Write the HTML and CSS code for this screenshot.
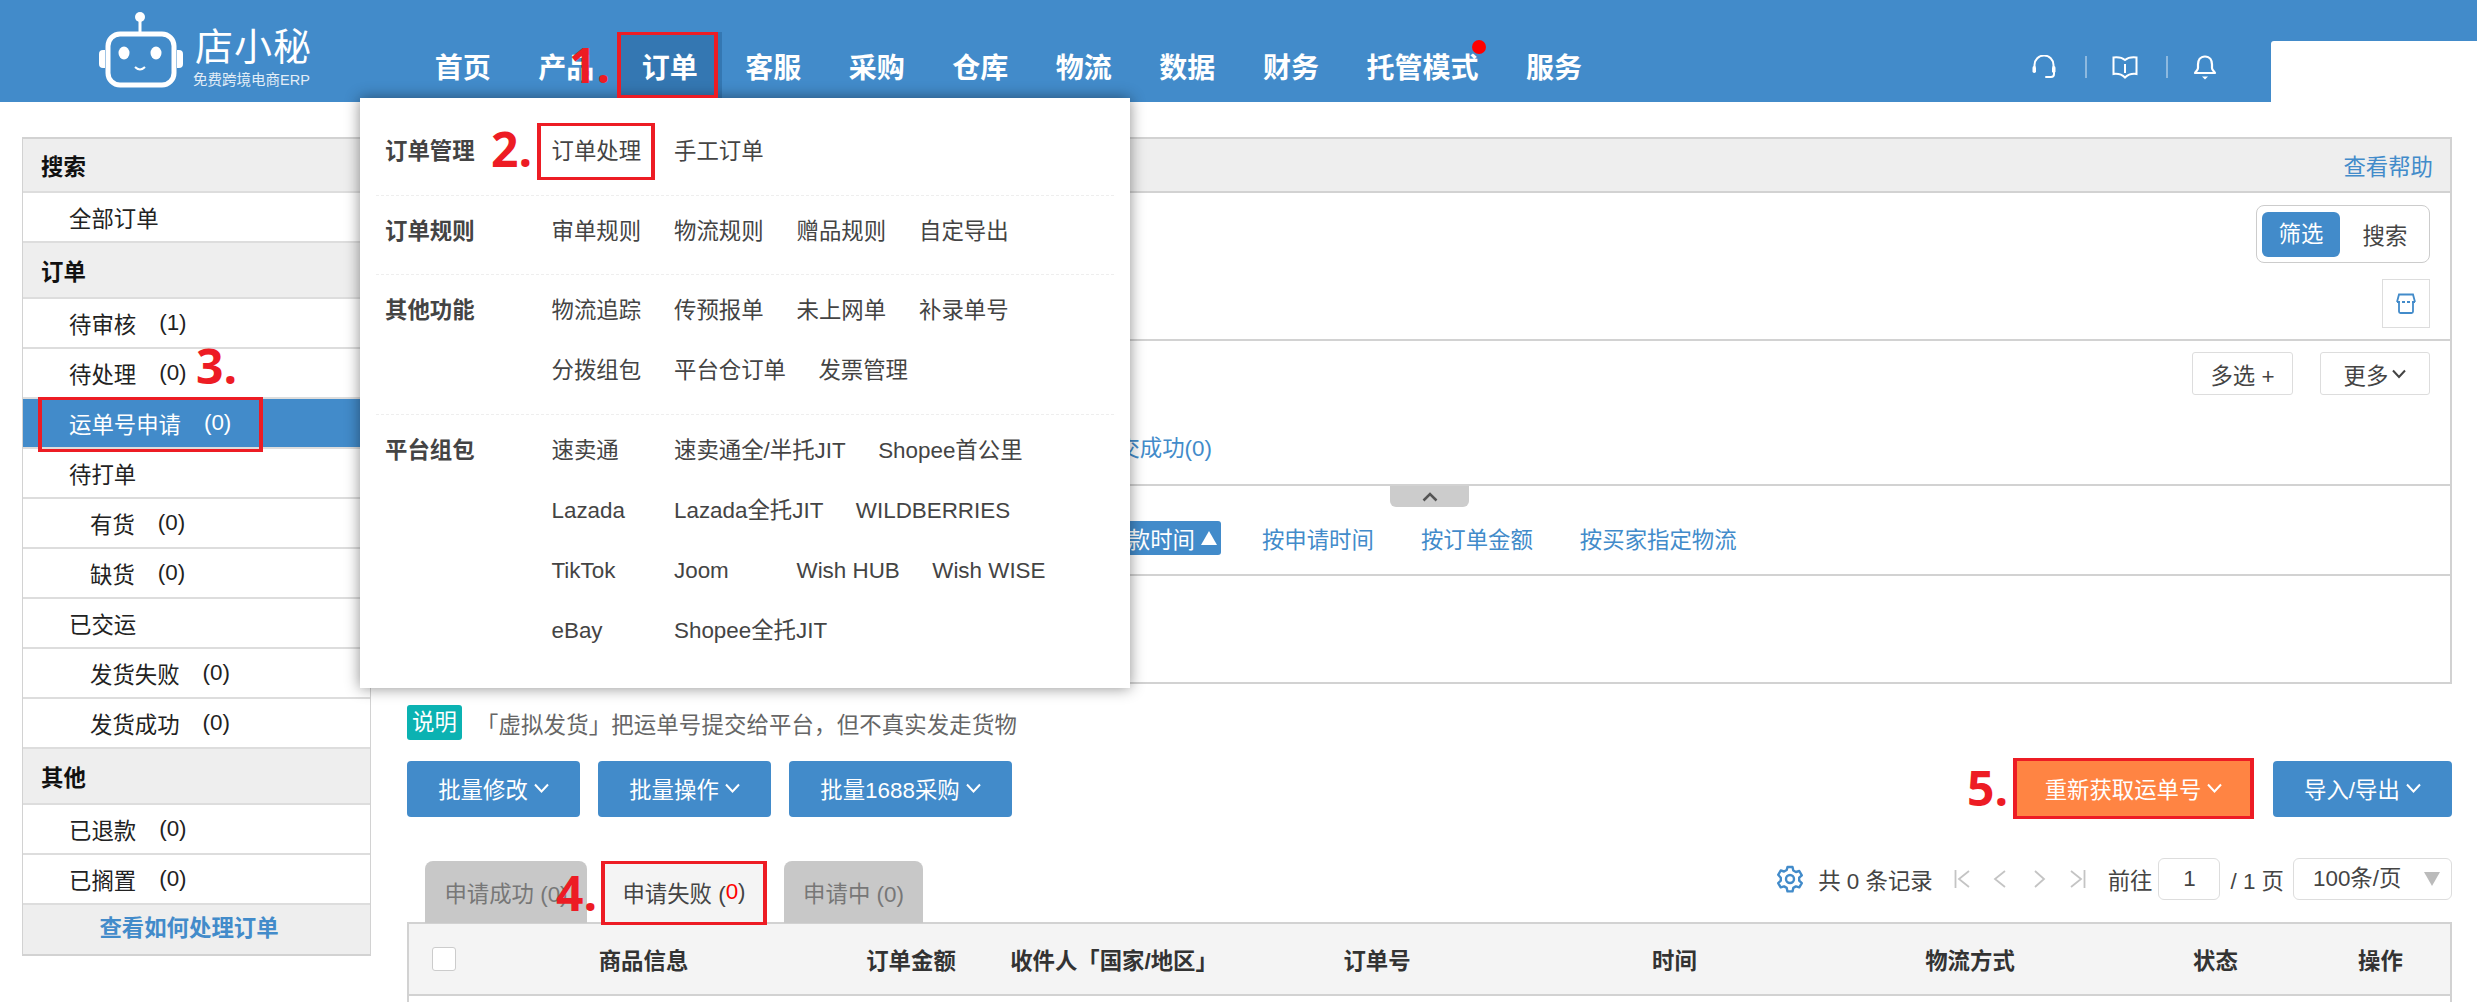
FILE: index.html
```html
<!DOCTYPE html>
<html lang="zh-CN">
<head>
    <meta charset="UTF-8">
    <title>店小秘 - 订单</title>
    <link rel="stylesheet" href="styles.css">
</head>
<body>
    <div class="header">
        <div class="logo">
            <svg class="logo-bot" width="84" height="76" viewBox="0 0 84 76">
                <circle cx="41" cy="5" r="5" fill="#fff"/>
                <path d="M41 8v12" stroke="#fff" stroke-width="3"/>
                <rect x="9" y="22" width="66" height="51" rx="12" fill="none" stroke="#fff" stroke-width="5"/>
                <path d="M6 38h-2a4 4 0 0 0-4 4v10a4 4 0 0 0 4 4h2zM78 38h2a4 4 0 0 1 4 4v10a4 4 0 0 1-4 4h-2z" fill="#fff"/>
                <ellipse cx="25" cy="41" rx="5.5" ry="6.5" fill="#fff"/>
                <ellipse cx="57" cy="41" rx="5.5" ry="6.5" fill="#fff"/>
                <path d="M36 55q5 5 10 0" fill="none" stroke="#fff" stroke-width="2"/>
            </svg>
            <div class="logo-text">
                <div class="logo-name">店小秘</div>
                <div class="logo-sub">免费跨境电商ERP</div>
            </div>
        </div>
        <div class="nav">
            <div class="nav-item">首页</div>
            <div class="nav-item">产品</div>
            <div class="nav-item nav-active">订单</div>
            <div class="nav-item">客服</div>
            <div class="nav-item">采购</div>
            <div class="nav-item">仓库</div>
            <div class="nav-item">物流</div>
            <div class="nav-item">数据</div>
            <div class="nav-item">财务</div>
            <div class="nav-item">托管模式<span class="red-dot"></span></div>
            <div class="nav-item">服务</div>
        </div>
        <div class="tools">
            <svg width="26" height="24" viewBox="0 0 26 24" fill="none" stroke="#fff" stroke-width="2">
                <path d="M3.500 12V10a9.500 9.500 0 0 1 19 0v2"/>
                <rect x="1.500" y="11" width="3.500" height="7" rx="1.700" fill="#fff" stroke="none"/>
                <rect x="21" y="11" width="3.500" height="7" rx="1.700" fill="#fff" stroke="none"/>
                <path d="M23 17v2a3 3 0 0 1-3 3h-5" stroke-linecap="round"/>
            </svg>
            <span class="tool-sep"></span>
            <svg width="26" height="23" viewBox="0 0 26 23" fill="none" stroke="#fff" stroke-width="2">
                <path d="M13 4C10 1.500 6 1 1.500 1.500V18c4-.5 8 0 11.500 3.500C16.500 18 20.500 17.500 24.500 18V1.500C20 1 16 1.500 13 4z"/>
                <path d="M13 8v9"/>
            </svg>
            <span class="tool-sep"></span>
            <svg width="24" height="26" viewBox="0 0 24 26" fill="none" stroke="#fff" stroke-width="2.200">
                <path d="M12 2.500c-5 0-7 4-7 8v3.500c0 2-2 3-3 5h20c-1-2-3-3-3-5v-3.500c0-4-2-8-7-8z" stroke-linejoin="round"/>
                <path d="M9 22.500h6l-3 3z" fill="#fff" stroke="none"/>
            </svg>
        </div>
        <div class="notch"></div>
    </div>

    <div class="page">
        <div class="sidebar">
            <div class="side-title side-first">搜索</div>
            <div class="side-row">全部订单</div>
            <div class="side-title">订单</div>
            <div class="side-row">待审核<span class="num">(1)</span></div>
            <div class="side-row">待处理<span class="num">(0)</span></div>
            <div class="side-row side-active">运单号申请<span class="num">(0)</span></div>
            <div class="side-row">待打单</div>
            <div class="side-row side-sub">有货<span class="num">(0)</span></div>
            <div class="side-row side-sub">缺货<span class="num">(0)</span></div>
            <div class="side-row">已交运</div>
            <div class="side-row side-sub">发货失败<span class="num">(0)</span></div>
            <div class="side-row side-sub">发货成功<span class="num">(0)</span></div>
            <div class="side-title">其他</div>
            <div class="side-row">已退款<span class="num">(0)</span></div>
            <div class="side-row">已搁置<span class="num">(0)</span></div>
            <div class="side-foot">查看如何处理订单</div>
        </div>

        <div class="main">
            <div class="panel">
                <div class="panel-head"><span class="link">查看帮助</span></div>
                <div class="panel-filter">
                    <div class="switch">
                        <span class="switch-on">筛选</span>
                        <span class="switch-off">搜索</span>
                    </div>
                    <div class="icon-btn">
                        <svg width="20" height="21" viewBox="0 0 20 21" fill="none" stroke="#428bca" stroke-width="1.800">
                            <path d="M1 9L3 1.500h14L19 9"/>
                            <path d="M1 9h18" stroke-dasharray="3 2"/>
                            <path d="M3 9.500v9a1.500 1.500 0 0 0 1.500 1.500h11a1.500 1.500 0 0 0 1.500-1.500v-9"/>
                        </svg>
                    </div>
                </div>
                <div class="panel-status">
                    <div class="status-btns">
                        <span class="small-btn small-multi">多选 +</span>
                        <span class="small-btn small-more">更多
                            <svg width="14" height="10" viewBox="0 0 14 10" fill="none" stroke="#444" stroke-width="2"><path d="M1 1.500l6 6.500 6-6.500"/></svg>
                        </span>
                    </div>
                    <div class="status-link link">提交成功(0)</div>
                </div>
                <div class="panel-sort">
                    <div class="collapse">
                        <svg width="16" height="10" viewBox="0 0 16 10" fill="none" stroke="#555" stroke-width="2.500"><path d="M1.500 8.500L8 2l6.500 6.500"/></svg>
                    </div>
                    <span class="sort-on">按付款时间<i class="sort-arrow"></i></span>
                    <span class="link sort-link">按申请时间</span>
                    <span class="link sort-link">按订单金额</span>
                    <span class="link sort-link">按买家指定物流</span>
                </div>
                <div class="panel-blank"></div>
            </div>

            <div class="note">
                <span class="note-tag">说明</span>
                <span class="note-text">「虚拟发货」把运单号提交给平台，但不真实发走货物</span>
            </div>

            <div class="actions">
                <div class="action-group">
                    <span class="btn btn-batch1">批量修改<svg class="chev" width="15" height="10" viewBox="0 0 15 10"><path d="M1 1.500l6.500 7 6.500-7"/></svg></span>
                    <span class="btn btn-batch2">批量操作<svg class="chev" width="15" height="10" viewBox="0 0 15 10"><path d="M1 1.500l6.500 7 6.500-7"/></svg></span>
                    <span class="btn btn-batch3">批量1688采购<svg class="chev" width="15" height="10" viewBox="0 0 15 10"><path d="M1 1.500l6.500 7 6.500-7"/></svg></span>
                </div>
                <div class="action-group action-right">
                    <span class="btn btn-orange">重新获取运单号<svg class="chev" width="15" height="10" viewBox="0 0 15 10"><path d="M1 1.500l6.500 7 6.500-7"/></svg></span>
                    <span class="btn btn-import">导入/导出<svg class="chev" width="15" height="10" viewBox="0 0 15 10"><path d="M1 1.500l6.500 7 6.500-7"/></svg></span>
                </div>
            </div>

            <div class="tabbar">
                <div class="tabs">
                    <span class="tab tab-ok">申请成功 (0)</span>
                    <span class="tab tab-on">申请失败 (<b>0</b>)</span>
                    <span class="tab tab-ing">申请中 (0)</span>
                </div>
                <div class="pager">
                    <svg class="gear" width="28" height="28" viewBox="0 0 28 28" fill="none" stroke="#428bca" stroke-width="2.400" stroke-linejoin="round">
                        <path d="M11.500 2h5l.8 3.500 2.600 1.500 3.400-1 2.500 4.300-2.600 2.400v3l2.600 2.400-2.500 4.300-3.400-1-2.600 1.500-.8 3.500h-5l-.8-3.500-2.600-1.500-3.400 1-2.500-4.300 2.600-2.400v-3L2.200 9.800l2.500-4.300 3.400 1 2.600-1.500z"/>
                        <circle cx="14" cy="14" r="4"/>
                    </svg>
                    <span class="total">共 0 条记录</span>
                    <span class="page-arrows">
                        <svg width="16" height="18" viewBox="0 0 16 18" fill="none" stroke="#c4c4c4" stroke-width="1.800"><path d="M1.500 0v18M15 1L5 9l10 8"/></svg>
                        <svg width="16" height="18" viewBox="0 0 16 18" fill="none" stroke="#c4c4c4" stroke-width="1.800"><path d="M13 1L3 9l10 8"/></svg>
                        <svg width="16" height="18" viewBox="0 0 16 18" fill="none" stroke="#c4c4c4" stroke-width="1.800"><path d="M5 1l9 8-9 8"/></svg>
                        <svg width="18" height="18" viewBox="0 0 18 18" fill="none" stroke="#c4c4c4" stroke-width="1.800"><path d="M3 1l10 8-10 8M16.500 0v18"/></svg>
                    </span>
                    <span class="goto">前往</span>
                    <span class="page-input">1</span>
                    <span class="page-of">/ 1 页</span>
                    <span class="page-size">100条/页<i class="tri"></i></span>
                </div>
            </div>

            <div class="thead">
                <div class="th"><span class="check"></span></div>
                <div class="th">商品信息</div>
                <div class="th">订单金额</div>
                <div class="th">收件人「国家/地区」</div>
                <div class="th">订单号</div>
                <div class="th">时间</div>
                <div class="th">物流方式</div>
                <div class="th">状态</div>
                <div class="th">操作</div>
            </div>
            <div class="tbody"></div>
        </div>
    </div>

    <!-- 下拉菜单 -->
    <div class="menu">
        <div class="menu-group">
            <div class="menu-label">订单管理</div>
            <div class="menu-items">
                <span>订单处理</span><span>手工订单</span>
            </div>
        </div>
        <div class="menu-group">
            <div class="menu-label">订单规则</div>
            <div class="menu-items">
                <span>审单规则</span><span>物流规则</span><span>赠品规则</span><span>自定导出</span>
            </div>
        </div>
        <div class="menu-group">
            <div class="menu-label">其他功能</div>
            <div class="menu-items">
                <span>物流追踪</span><span>传预报单</span><span>未上网单</span><span>补录单号</span>
                <span>分拨组包</span><span>平台仓订单</span><span>发票管理</span>
            </div>
        </div>
        <div class="menu-group">
            <div class="menu-label">平台组包</div>
            <div class="menu-items">
                <span>速卖通</span><span>速卖通全/半托JIT</span><span>Shopee首公里</span>
                <span class="br">Lazada</span><span>Lazada全托JIT</span><span>WILDBERRIES</span>
                <span class="br">TikTok</span><span>Joom</span><span>Wish HUB</span><span>Wish WISE</span>
                <span class="br">eBay</span><span>Shopee全托JIT</span>
            </div>
        </div>
    </div>

    <!-- 教程标注 -->
    <div class="mark mark-1">1.</div>
    <div class="mark mark-2">2.</div>
    <div class="mark mark-3">3.</div>
    <div class="mark mark-4">4.</div>
    <div class="mark mark-5">5.</div>
    <div class="red-box box-nav"></div>
    <div class="red-box box-menu"></div>
    <div class="red-box box-side"></div>
    <div class="red-box box-tab"></div>
</body>
</html>
```

FILE: styles.css
```css
* {
    box-sizing: border-box;
}
html, body {
    margin: 0;
    padding: 0;
    height: 1002px;
    overflow: hidden;
}
body {
    font-family: "Liberation Sans", "Noto Sans CJK SC", sans-serif;
    font-size: 22.4px;
    color: #444;
    background-color: #fff;
}
.link {
    color: #428bca;
}

/* 顶部导航 */
.header {
    display: flex;
    align-items: flex-end;
    height: 102px;
    background-color: #428bca;
}
.logo {
    display: flex;
    align-self: flex-start;
    width: 411px;
    padding: 12px 0 0 99px;
    color: #fff;
}
.logo-text {
    margin: 13px 0 0 10px;
}
.logo-name {
    font-size: 38px;
    line-height: 44px;
    padding-left: 2px;
    letter-spacing: 1px;
}
.logo-sub {
    font-size: 14.500px;
    line-height: 18px;
    margin-top: 2px;
    opacity: .85;
}
.nav {
    display: flex;
    margin-bottom: 4px;
}
.nav-item {
    position: relative;
    display: flex;
    align-items: center;
    height: 66px;
    padding: 2px 23.750px 0;
    font-size: 28px;
    font-weight: bold;
    color: #fff;
}
.nav-active {
    background-color: #3477b2;
}
.red-dot {
    position: absolute;
    top: 8px;
    right: 16px;
    width: 14px;
    height: 14px;
    border-radius: 50%;
    background-color: #f00;
}
.tools {
    display: flex;
    align-items: center;
    margin: 0 54px 22px auto;
}
.tool-sep {
    width: 2px;
    height: 22px;
    margin: 0 25px 0 28px;
    background-color: #8db9df;
}
.tools svg {
    display: block;
}
.notch {
    width: 206px;
    height: 61px;
    background-color: #fff;
    border-top-left-radius: 3px;
}

/* 左侧菜单 */
.page {
    display: flex;
    align-items: flex-start;
    padding: 35px 25px 0 22px;
}
.sidebar {
    width: 349px;
    border: solid #d2d2d2;
    border-width: 2px 1px 2px 1px;
    color: #222;
}
.side-title {
    display: flex;
    align-items: center;
    height: 56px;
    padding-left: 18px;
    font-weight: bold;
    color: #111;
    background-color: #eee;
    border-bottom: 2px solid #ddd;
}
.side-first {
    height: 54px;
}
.side-row {
    display: flex;
    align-items: center;
    height: 50px;
    padding-left: 46px;
    border-bottom: 2px solid #ddd;
}
.side-sub {
    padding-left: 67px;
}
.side-active {
    color: #fff;
    background-color: #428bca;
}
.num {
    margin-left: 23px;
}
.side-foot {
    height: 49px;
    line-height: 48px;
    padding-right: 15px;
    text-align: center;
    font-weight: bold;
    color: #428bca;
    background-color: #eee;
}

/* 主区域 */
.main {
    width: 2045px;
    margin-left: 36px;
}
.panel {
    height: 547px;
    border: 2px solid #d2d2d2;
    display: flex;
    flex-direction: column;
}
.panel-head {
    display: flex;
    justify-content: flex-end;
    align-items: center;
    height: 54px;
    padding-right: 17px;
    background-color: #eee;
    border-bottom: 2px solid #d2d2d2;
}
.panel-filter {
    display: flex;
    flex-direction: column;
    align-items: flex-end;
    height: 148px;
    padding: 12px 20px 0 0;
    border-bottom: 2px solid #d2d2d2;
}
.switch {
    display: flex;
    align-items: center;
    width: 174px;
    height: 58px;
    padding: 0 5px;
    border: 1px solid #ccc;
    border-radius: 8px;
}
.switch-on {
    width: 78px;
    height: 45px;
    line-height: 45px;
    text-align: center;
    color: #fff;
    background-color: #428bca;
    border-radius: 6px;
}
.switch-off {
    flex: 1;
    padding-left: 6px;
    text-align: center;
}
.icon-btn {
    display: flex;
    justify-content: center;
    align-items: center;
    width: 48px;
    height: 49px;
    margin-top: 16px;
    border: 1px solid #ddd;
}
.panel-status {
    height: 145px;
    padding: 11px 20px 0 0;
    border-bottom: 2px solid #d2d2d2;
}
.status-btns {
    display: flex;
    justify-content: flex-end;
    gap: 27px;
}
.small-btn {
    display: flex;
    justify-content: center;
    align-items: center;
    gap: 4px;
    height: 43px;
    border: 1px solid #ddd;
    border-radius: 3px;
}
.small-multi {
    width: 101px;
}
.small-more {
    width: 110px;
}
.status-link {
    margin: 39px 0 0 686px;
    line-height: 30px;
}
.panel-sort {
    position: relative;
    display: flex;
    align-items: center;
    height: 90px;
    padding: 15px 0 0 661px;
    border-bottom: 2px solid #d2d2d2;
}
.collapse {
    position: absolute;
    top: 0;
    left: 981px;
    display: flex;
    justify-content: center;
    align-items: center;
    width: 79px;
    height: 21px;
    background-color: #ccc;
    border-radius: 0 0 6px 6px;
}
.sort-on {
    display: flex;
    align-items: center;
    gap: 6px;
    height: 34px;
    padding: 0 4px 0 13px;
    color: #fff;
    background-color: #428bca;
    border-radius: 3px;
}
.sort-arrow {
    border-bottom: 14px solid #fff;
    border-left: 8px solid transparent;
    border-right: 8px solid transparent;
}
.sort-link {
    margin-left: 41px;
    margin-right: 6px;
}
.panel-blank {
    flex: 1;
}

/* 说明 */
.note {
    display: flex;
    align-items: center;
    gap: 14px;
    margin-top: 21px;
    color: #666;
}
.note-text {
    letter-spacing: .15px;
}
.note-tag {
    width: 55px;
    height: 35px;
    line-height: 35px;
    text-align: center;
    color: #fff;
    background-color: #0bb2b2;
    border-radius: 3px;
}

/* 操作按钮 */
.actions {
    display: flex;
    justify-content: space-between;
    align-items: center;
    margin-top: 18px;
}
.action-group {
    display: flex;
    align-items: center;
    gap: 18px;
}
.action-right {
    gap: 19px;
}
.btn {
    display: flex;
    align-items: center;
    justify-content: center;
    gap: 6px;
    height: 56px;
    padding-bottom: 2px;
    color: #fff;
    background-color: #428bca;
    border-radius: 4px;
}
.btn-batch1, .btn-batch2 {
    width: 173px;
}
.btn-batch3 {
    width: 223px;
}
.btn-import {
    width: 179px;
}
.btn-orange {
    width: 241px;
    height: 61px;
    background-color: #ff8443;
    border: solid #ed1c24;
    border-width: 3px 4px;
    border-radius: 0;
}
.chev {
    fill: none;
    stroke: #fff;
    stroke-width: 2;
}

/* 标签页和分页 */
.tabbar {
    position: relative;
    display: flex;
    justify-content: space-between;
    align-items: flex-start;
    margin-top: 42px;
    height: 61px;
}
.tabs {
    display: flex;
    padding-left: 18px;
}
.tab {
    display: flex;
    align-items: center;
    justify-content: center;
    height: 62px;
    color: #777;
    background-color: #c8c8c8;
    border-radius: 8px 8px 0 0;
}
.tab-ok {
    width: 162px;
}
.tab-on {
    width: 166px;
    margin: 0 17px 0 14px;
    color: #444;
    background-color: #f4f4f4;
    border-radius: 0;
}
.tab-on b {
    font-weight: normal;
    color: #f00;
}
.tab-ing {
    width: 139px;
}
.pager {
    display: flex;
    align-items: center;
    height: 42px;
    margin-top: -3px;
}
.gear {
    margin-right: 14px;
}
.total {
    margin-right: 21px;
}
.page-arrows {
    display: flex;
    gap: 22px;
    margin-right: 22px;
}
.page-input {
    width: 62px;
    height: 42px;
    line-height: 40px;
    margin: 0 10px 0 6px;
    text-align: center;
    border: 1px solid #ddd;
    border-radius: 6px;
}
.page-of {
    margin-right: 9px;
}
.page-size {
    position: relative;
    width: 159px;
    height: 42px;
    line-height: 40px;
    padding-left: 19px;
    border: 1px solid #ddd;
    border-radius: 6px;
}
.tri {
    position: absolute;
    top: 13px;
    right: 11px;
    border-top: 14px solid #bbb;
    border-left: 8px solid transparent;
    border-right: 8px solid transparent;
}
.thead {
    display: grid;
    grid-template-columns: 59px 351px 184px 222px 304px 291px 300px 191px 1fr;
    align-items: center;
    height: 74px;
    background-color: #f4f4f4;
    border: 2px solid #d2d2d2;
    font-weight: bold;
    color: #333;
}
.th {
    text-align: center;
}
.check {
    display: block;
    width: 24px;
    height: 24px;
    margin-left: 23px;
    background-color: #fff;
    border: 1px solid #ccc;
    border-radius: 3px;
}
.tbody {
    height: 20px;
    border-left: 2px solid #d2d2d2;
    border-right: 2px solid #d2d2d2;
}

/* 下拉菜单 */
.menu {
    position: absolute;
    top: 98px;
    left: 360px;
    width: 770px;
    height: 590px;
    padding: 18px 16px 0;
    background-color: #fff;
    box-shadow: 0 0 14px rgba(0, 0, 0, .45);
}
.menu-group {
    display: flex;
    padding: 6px 0 13px 9px;
    border-bottom: 1px dashed #eee;
}
.menu-group:nth-child(2) {
    padding-bottom: 12px;
}
.menu-group:last-child {
    border-bottom: none;
}
.menu-label {
    width: 166.500px;
    line-height: 60px;
    font-weight: bold;
    color: #444;
}
.menu-items {
    display: flex;
    flex-wrap: wrap;
    flex: 1;
}
.menu-items span {
    min-width: 90px;
    height: 60px;
    line-height: 60px;
    margin-right: 32.500px;
}
.menu-items .br {
    width: 90px;
}

/* 教程标注 */
.mark {
    position: absolute;
    font-family: "Open Sans", sans-serif;
    font-size: 48px;
    font-weight: bold;
    line-height: 1;
    color: #ed1c24;
}
.mark-1 { top: 41px; left: 569px; }
.mark-2 { top: 125px; left: 491px; }
.mark-3 { top: 342px; left: 196px; }
.mark-4 { top: 869px; left: 556px; }
.mark-5 { top: 764px; left: 1967px; }
.red-box {
    position: absolute;
    border: solid #ed1c24;
    border-width: 3px 4px;
}
.box-nav { top: 32px; left: 617px; width: 101px; height: 66px; }
.box-menu { top: 123px; left: 537px; width: 118px; height: 57px; }
.box-side { top: 397px; left: 38px; width: 225px; height: 55px; }
.box-tab { top: 861px; left: 601px; width: 166px; height: 64px; }
```
